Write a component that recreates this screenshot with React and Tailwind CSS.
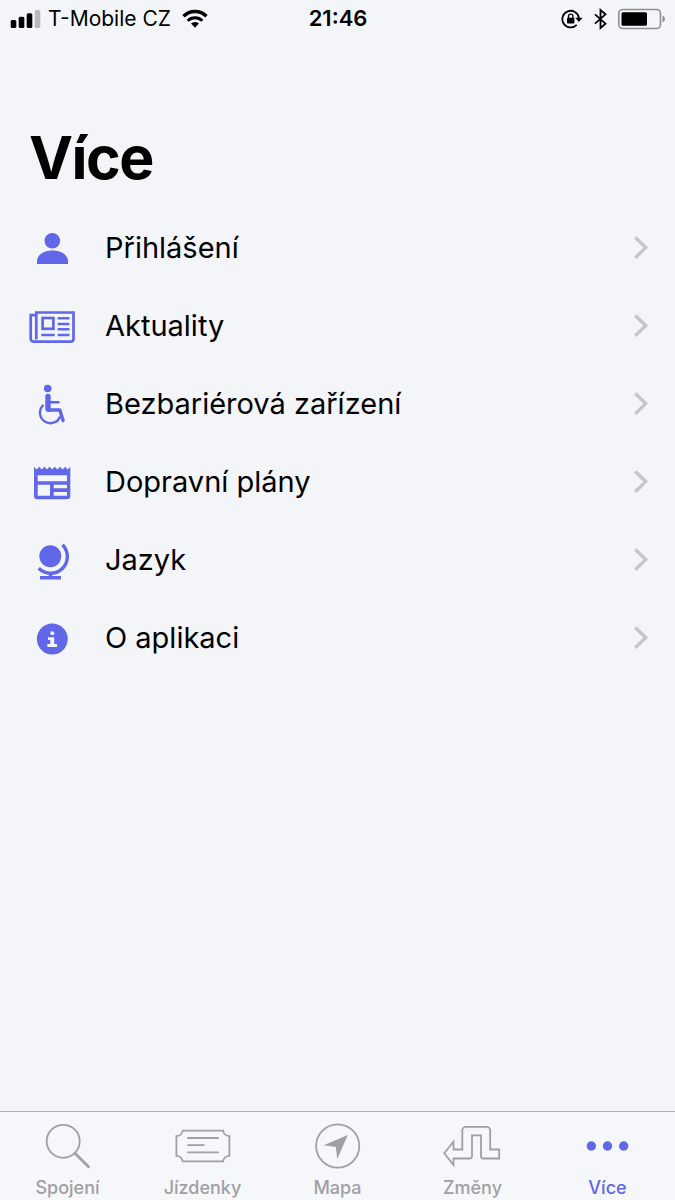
import React from 'react';

// ── Menu Items ─────────────────────────────────────────────────
const menuItems = [
  {
    label: 'Přihlášení',
    href: '#prihlaseni',
    icon: (
      <svg className="size-[46px] shrink-0" viewBox="0 0 46 46" fill="currentColor" aria-hidden="true">
        <circle cx="23.3" cy="15.8" r="7.8" />
        <path d="M8 39v-3C8 30.3 14.5 25.6 23.5 25.6S39 30.300 39 36v3z" />
      </svg>
    ),
  },
  {
    label: 'Aktuality',
    href: '#aktuality',
    icon: (
      <svg className="size-[46px] shrink-0" viewBox="0 0 46 46" fill="none" stroke="currentColor" strokeWidth="2.7" aria-hidden="true">
        <path d="M7.3 36.500V9.500h37.200v26.700a2.500 2.500 0 0 1-2.500 2.500H4.500a2.800 2.800 0 0 1-2.800-2.800V12.200h5.600" />
        <rect x="13.6" y="15" width="10.8" height="10.8" />
        <path d="M28.700 15.300H40.500M28.700 20.900H40.500M28.700 26.200H40.500M12.300 31.900H25.700M28.700 31.900H40.500" strokeWidth="2.5" />
      </svg>
    ),
  },
  {
    label: 'Bezbariérová zařízení',
    href: '#bezbarierova-zarizeni',
    icon: (
      <svg className="size-[46px] shrink-0" viewBox="0 0 46 46" fill="none" stroke="currentColor" aria-hidden="true">
        <circle cx="18.7" cy="7.5" r="3.8" fill="currentColor" stroke="none" />
        <path d="M16.300 15.500a2.700 2.700 0 0 1 5.400 0V30.700h-2.500a2.800 2.800 0 0 1-2.900-2.800z" fill="currentColor" stroke="none" />
        <path d="M20 21.300h9.500" strokeWidth="2.4" strokeLinecap="round" />
        <path d="M19.500 29h11.300l3.300 10.600" strokeWidth="3.4" strokeLinecap="round" strokeLinejoin="round" />
        <path d="M14.600 23.900a10.400 10.400 0 1 0 16.500 11.600" strokeWidth="2.4" />
      </svg>
    ),
  },
  {
    label: 'Dopravní plány',
    href: '#dopravni-plany',
    icon: (
      <svg className="size-[46px] shrink-0" viewBox="0 0 46 46" fill="currentColor" fillRule="evenodd" aria-hidden="true">
        <path d="M5 7.700l2.600 2.800 2.600-2.800 2.600 2.800 2.600-2.800 2.600 2.800 2.600-2.800 2.600 2.800 2.600-2.800 2.600 2.800 2.600-2.800 2.600 2.800 2.600-2.800 2.500 2.800 2.600-2.800V37a3.300 3.300 0 0 1-3.300 3.300H8.300A3.300 3.300 0 0 1 5 37zM8.700 16.300v6H38v-6zM8.700 25.700v11H21v-11zM24.700 25.700v3.600H38v-3.600zM24.700 33v3.700H38V33z" />
      </svg>
    ),
  },
  {
    label: 'Jazyk',
    href: '#jazyk',
    icon: (
      <svg className="size-[46px] shrink-0" viewBox="0 0 46 46" fill="none" stroke="currentColor" strokeWidth="3.4" aria-hidden="true">
        <circle cx="21.3" cy="19.3" r="11" fill="currentColor" stroke="none" />
        <path d="M33.500 7.800A16.700 16.700 0 0 1 9.700 31.300" />
        <path d="M21.500 35v6M11 40.800h21" />
      </svg>
    ),
  },
  {
    label: 'O aplikaci',
    href: '#o-aplikaci',
    icon: (
      <svg className="size-[46px] shrink-0" viewBox="0 0 46 46" aria-hidden="true">
        <circle cx="23.3" cy="24" r="15.4" fill="currentColor" />
        <circle cx="23.3" cy="18.2" r="2" fill="#f4f5f9" />
        <path d="M19 22.200h6.200v6.900H28v2.900h-9.600v-2.900h2.900v-4.200H19z" fill="#f4f5f9" />
      </svg>
    ),
  },
];

// ── Tab Bar ────────────────────────────────────────────────────
const tabs = [
  {
    label: 'Spojení',
    href: '#spojeni',
    icon: (
      <svg className="h-12 w-[60px]" viewBox="0 0 60 48" fill="none" stroke="currentColor" aria-hidden="true">
        <circle cx="25.2" cy="19.3" r="16.5" strokeWidth="1.8" />
        <path d="M37 31.300L50.500 44.700" strokeWidth="2.8" strokeLinecap="round" />
      </svg>
    ),
  },
  {
    label: 'Jízdenky',
    href: '#jizdenky',
    icon: (
      <svg className="h-12 w-[60px]" viewBox="0 0 60 48" fill="none" stroke="currentColor" strokeWidth="1.8" aria-hidden="true">
        <path d="M9.700 8.700h40.400a6.500 6.500 0 0 0 6.300 5.500v19.600a6.500 6.500 0 0 0-6.300 5.500H9.700A6.500 6.500 0 0 0 3.400 33.800V14.200a6.500 6.500 0 0 0 6.300-5.500z" />
        <path d="M14.200 16h31.600M14.200 23.200h17.300M14.200 30.300h31.600" />
      </svg>
    ),
  },
  {
    label: 'Mapa',
    href: '#mapa',
    icon: (
      <svg className="h-12 w-[60px]" viewBox="0 0 60 48" fill="none" stroke="currentColor" strokeWidth="1.8" aria-hidden="true">
        <circle cx="29.7" cy="24" r="21.6" />
        <path d="M39.700 13L15.700 23.300l12.200 1.700 1.300 12.300z" fill="currentColor" stroke="none" />
      </svg>
    ),
  },
  {
    label: 'Změny',
    href: '#zmeny',
    icon: (
      <svg className="h-12 w-[60px]" viewBox="0 0 60 48" fill="none" stroke="currentColor" strokeWidth="1.8" aria-hidden="true">
        <path d="M1.300 31.300L10.500 19.500v8h8.800V8.300a3.500 3.500 0 0 1 3.500-3.500h20.900a3.500 3.500 0 0 1 3.500 3.500v19.200h9v9H40.500a2.500 2.500 0 0 1-2.500-2.500V13.300h-9V34a2.500 2.500 0 0 1-2.500 2.500H10.500V43z" />
      </svg>
    ),
  },
  {
    label: 'Více',
    href: '#vice',
    active: true,
    icon: (
      <svg className="h-12 w-[60px]" viewBox="0 0 60 48" fill="currentColor" aria-hidden="true">
        <circle cx="13.3" cy="24" r="4.7" />
        <circle cx="29.5" cy="24" r="4.7" />
        <circle cx="45.700" cy="24" r="4.7" />
      </svg>
    ),
  },
];

const StatusBar = () => (
  <div className="grid grid-cols-[1fr_auto_1fr] items-center h-[37px] pl-[10px] pr-[9px] text-[21px] leading-[37px]">
    {/* Carrier */}
    <div className="flex items-center gap-[7px]">
      <svg className="w-[31px] h-5 shrink-0" viewBox="0 0 31 20" aria-hidden="true">
        <rect x="0.7" y="11" width="5.6" height="8" rx="1.5" />
        <rect x="8.7" y="7.8" width="5.6" height="11.2" rx="1.5" />
        <rect x="16.7" y="4.3" width="5.6" height="14.7" rx="1.5" />
        <rect x="24.7" y="1" width="5.6" height="18" rx="1.5" fill="#b9b9bb" />
      </svg>
      <span className="whitespace-nowrap">T-Mobile CZ</span>
      <svg className="w-[26px] h-5 shrink-0 ml-1" viewBox="0 0 26 20" fill="none" stroke="#000" strokeWidth="3.4" aria-hidden="true">
        <path d="M1.500 7.300a16.300 16.300 0 0 1 23 0" />
        <path d="M5.700 11.800a10.300 10.300 0 0 1 14.600 0" strokeWidth="3" />
        <path d="M13 18.700l-4-4.100a5.700 5.700 0 0 1 8 0z" fill="#000" stroke="none" />
      </svg>
    </div>

    <span className="text-[22px] font-semibold">21:46</span>

    {/* Rotation lock, Bluetooth, Battery */}
    <div className="flex items-center justify-end gap-[11px]">
      <svg className="w-[22px] h-5" viewBox="0 0 22 20" fill="none" stroke="#000" strokeWidth="1.8" aria-hidden="true">
        <path d="M15.700 15.800A8.300 8.300 0 1 1 17.900 9" />
        <path d="M14.300 8.700h7.200l-3.600 4.200z" fill="#000" stroke="none" />
        <rect x="6" y="8.8" width="7.4" height="5.8" rx="0.8" fill="#000" stroke="none" />
        <path d="M7.500 9V7.300a2.200 2.200 0 0 1 4.400 0V9" strokeWidth="1.4" />
      </svg>
      <svg className="w-[13px] h-[22px]" viewBox="0 0 13 22" fill="none" stroke="#000" strokeWidth="1.8" aria-hidden="true">
        <path d="M1 6.300l10.500 9.400L6.500 20V2l5 4.300L1 15.700" />
      </svg>
      <svg className="w-12 h-[22px]" viewBox="0 0 48 22" aria-hidden="true">
        <rect x="0.8" y="1.5" width="41.7" height="19" rx="4" fill="none" stroke="#8f8f92" strokeWidth="1.6" />
        <rect x="3.5" y="4.2" width="25.5" height="13.6" rx="1.5" />
        <path d="M44.500 7.700c3.200 1 3.200 5.600 0 6.600z" fill="#8f8f92" />
      </svg>
    </div>
  </div>
);

const App = () => {
  return (
    <div className="min-h-screen flex flex-col bg-[#f4f5f9] text-black font-['Inter',sans-serif]">
      <header>
        <StatusBar />
        <h1 className="pt-[86px] pb-4 pl-[29px] text-[59px] leading-[70px] font-bold tracking-tight">
          Více
        </h1>
      </header>

      {/* ── Menu ─────────────────────────────────────────────── */}
      <main className="flex-1">
        <ul>
          {menuItems.map((item) => (
            <li key={item.label}>
              <a href={item.href} className="flex items-center h-[78px] pl-[29px] pr-[26px]">
                <span className="text-[#6067e9]">{item.icon}</span>
                <span className="flex-1 pl-[30px] text-[29px]">{item.label}</span>
                <svg className="w-4 h-6 text-[#c5c6ca]" viewBox="0 0 16 24" fill="none" stroke="currentColor" strokeWidth="3.4" aria-hidden="true">
                  <path d="M2.300 1.500L12.700 11.600 2.300 21.800" />
                </svg>
              </a>
            </li>
          ))}
        </ul>
      </main>

      <nav className="sticky bottom-0 grid grid-cols-5 h-[89px] border-t border-[#b2b3b7] bg-[#f6f7fa]">
        {tabs.map((tab) => (
          <a
            key={tab.label}
            href={tab.href}
            aria-current={tab.active ? 'page' : undefined}
            className={`flex flex-col items-center pt-[10px] ${tab.active ? 'text-[#6067e9]' : 'text-[#9fa0a3]'}`}
          >
            {tab.icon}
            <span className="pt-[6px] text-[18px] leading-6 font-medium">{tab.label}</span>
          </a>
        ))}
      </nav>
    </div>
  );
};

export default App;
